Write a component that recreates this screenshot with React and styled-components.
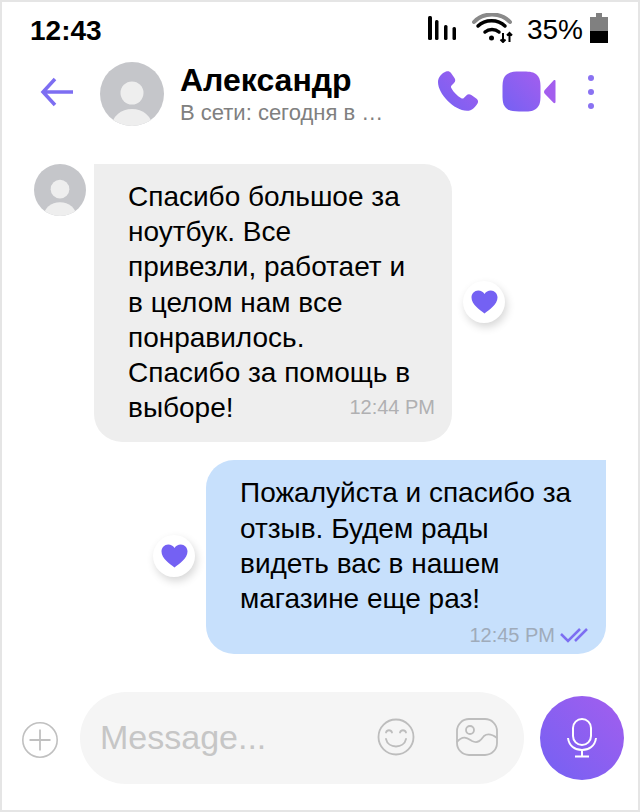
import React from "react";
import styled, { createGlobalStyle } from "styled-components";

const GlobalStyle = createGlobalStyle`
  html, body {
    margin: 0;
    padding: 0;
    background: #fff;
  }
  * {
    box-sizing: border-box;
  }
`;

const Frame = styled.div`
  width: 640px;
  height: 812px;
  border: 2px solid #e5e5e5;
  background: #fff;
  display: flex;
  flex-direction: column;
  font-family: "Liberation Sans", Arial, sans-serif;
  color: #000;
  overflow: hidden;
`;

const StatusBar = styled.div`
  height: 58px;
  flex: none;
  padding: 8px 30px 0 28px;
  display: flex;
  justify-content: space-between;
  align-items: flex-start;
`;

const Clock = styled.div`
  font-size: 28px;
  line-height: 42px;
  font-weight: 700;
`;

const StatusIcons = styled.div`
  display: flex;
  align-items: center;
  height: 36px;
`;

const Battery = styled.div`
  font-size: 28px;
  line-height: 42px;
  margin: 0 7px 0 14px;
  position: relative;
  top: 2px;
`;

const Header = styled.div`
  height: 68px;
  flex: none;
  padding-left: 36px;
  display: flex;
  align-items: center;
`;

const BackButton = styled.div`
  width: 62px;
  margin-top: -4px;
  display: flex;
  align-items: center;
`;

const Avatar = styled.div`
  width: ${(p) => p.$size}px;
  height: ${(p) => p.$size}px;
  flex: none;
  border-radius: 50%;
  background: #c5c6ca;
  overflow: hidden;
`;

const AvatarIcon = styled.svg`
  display: block;
  width: 100%;
  height: 100%;
`;

const Contact = styled.div`
  width: 256px;
  margin-left: 16px;
`;

const Name = styled.div`
  font-size: 32px;
  line-height: 36px;
  font-weight: 700;
`;

const Presence = styled.div`
  font-size: 22px;
  line-height: 26px;
  margin-top: 2px;
  color: #808080;
  white-space: nowrap;
`;

const Actions = styled.div`
  display: flex;
  align-items: center;
  margin: -4px 0 0 1px;
`;

const Messages = styled.div`
  flex: 1;
  padding-top: 36px;
  display: flex;
  flex-direction: column;
  gap: 18px;
`;

const Row = styled.div`
  display: flex;
  align-items: center;
  justify-content: ${(p) => (p.$mine ? "flex-end" : "flex-start")};
  gap: 11px;
  padding: ${(p) => (p.$mine ? "0 32px 0 0" : "0 0 0 32px")};
`;

const IncomingWrap = styled.div`
  display: flex;
  gap: 8px;
  align-items: flex-start;
`;

const Bubble = styled.div`
  position: relative;
  width: ${(p) => (p.$mine ? 400 : 358)}px;
  padding: ${(p) => (p.$mine ? "15px 20px 38px 34px" : "15px 20px 17px 34px")};
  background: ${(p) => (p.$mine ? "#c7e0fc" : "#eeeeee")};
  border-radius: ${(p) => (p.$mine ? "28px 0 28px 28px" : "0 28px 28px 28px")};
  font-size: 28px;
  line-height: 35.2px;
`;

const Meta = styled.div`
  position: absolute;
  right: ${(p) => (p.$mine ? 18 : 17)}px;
  bottom: ${(p) => (p.$mine ? 8 : 24)}px;
  display: flex;
  align-items: center;
  gap: 5px;
  font-size: 20px;
  line-height: 22px;
  color: ${(p) => (p.$mine ? "#9fabba" : "#b0b0b2")};
`;

const Reaction = styled.div`
  width: 42px;
  height: 42px;
  flex: none;
  margin-top: -2px;
  border-radius: 50%;
  background: #fff;
  box-shadow: 2px 4px 8px rgba(0, 0, 0, 0.16);
  display: flex;
  align-items: center;
  justify-content: center;
`;

const Composer = styled.div`
  flex: none;
  height: 118px;
  padding: 0 14px 26px 20px;
  display: flex;
  align-items: center;
`;

const PlusIcon = styled.svg`
  flex: none;
  margin-top: 4px;
`;

const InputPill = styled.div`
  width: 444px;
  height: 92px;
  margin-left: 22px;
  padding: 0 26px 0 20px;
  border-radius: 46px;
  background: #f5f5f5;
  display: flex;
  align-items: center;
`;

const Placeholder = styled.div`
  flex: 1;
  font-size: 34px;
  color: #c6c6c6;
  margin-top: -2px;
`;

const PillIcons = styled.div`
  display: flex;
  align-items: center;
  gap: 41px;
  margin-top: -2px;
`;

const MicButton = styled.div`
  width: 84px;
  height: 84px;
  margin-left: 16px;
  flex: none;
  border-radius: 50%;
  background: linear-gradient(45deg, #7461f3, #a35eee);
  display: flex;
  align-items: center;
  justify-content: center;
`;

const Gradient = () => (
  <svg width="0" height="0" style={{ position: "absolute" }}>
    <defs>
      <linearGradient id="violet" x1="0" y1="1" x2="1" y2="0">
        <stop offset="0" stopColor="#7461f3" />
        <stop offset="1" stopColor="#a35eee" />
      </linearGradient>
    </defs>
  </svg>
);

const Person = () => (
  <AvatarIcon viewBox="0 0 64 64">
    <circle cx="32" cy="31" r="11.5" fill="#eeeeee" />
    <ellipse cx="32" cy="64" rx="20" ry="17" fill="#eeeeee" />
  </AvatarIcon>
);

const Heart = () => (
  <svg width="27" height="24" viewBox="0 0 27 24">
    <path
      d="M13.5 23.5C9 20 .5 14.5.5 7.5.5 3.4 3.6.5 7.2.5c2.7 0 5 1.3 6.3 3.6C14.8 1.8 17.1.5 19.8.5c3.6 0 6.7 2.9 6.7 7 0 7-8.5 12.500-13 16z"
      fill="#7461f3"
    />
  </svg>
);

const App = () => (
  <>
    <GlobalStyle />
    <Gradient />
    <Frame>
      <StatusBar>
        <Clock>12:43</Clock>
        <StatusIcons>
          <svg width="28" height="24" viewBox="0 0 28 24" style={{ marginRight: 16 }}>
            <g fill="#000">
              <rect x="0" y="0" width="4" height="24" rx="1.5" />
              <rect x="7" y="4" width="3.5" height="20" rx="1.5" />
              <rect x="16" y="9" width="3.5" height="15" rx="1.5" />
              <rect x="24.5" y="11" width="3.5" height="13" rx="1.5" />
            </g>
          </svg>
          <svg width="41" height="30" viewBox="0 0 41 30">
            <g fill="none" strokeLinecap="round">
              <path d="M2 9C11 -1 29 -1 38 9" stroke="#8a8a8a" strokeWidth="4" />
              <path d="M6 13C13 6 26 6 33 13" stroke="#000" strokeWidth="3.5" />
              <path d="M13 19C17 15.500 23 15.500 27 19" stroke="#000" strokeWidth="3.5" />
            </g>
            <circle cx="19.5" cy="25" r="2.5" fill="#000" />
            <path d="M31 20v9M28.5 26.5 31 29l2.5-2.500M37.5 29v-9M35 22.500l2.500-2.500 2.500 2.500" stroke="#000" strokeWidth="2" fill="none" />
          </svg>
          <Battery>35%</Battery>
          <svg width="18" height="30" viewBox="0 0 18 30">
            <path d="M6 0h6v4h6v14H0V4h6z" fill="#808080" />
            <rect y="18" width="18" height="12" fill="#000" />
          </svg>
        </StatusIcons>
      </StatusBar>

      <Header>
        <BackButton>
          <svg width="36" height="32" viewBox="0 0 36 32" fill="none">
            <path d="M35 16H5M17 3 5 16l12 13" stroke="#7d6ef2" strokeWidth="3.5" />
          </svg>
        </BackButton>
        <Avatar $size={64}>
          <Person />
        </Avatar>
        <Contact>
          <Name>Александр</Name>
          <Presence>В сети: сегодня в …</Presence>
        </Contact>
        <Actions>
          <svg width="42" height="42" viewBox="0 0 42 42">
            <path
              d="M9 .5c2-.8 3.8-.3 5 1.5l3.5 5c1.2 1.8.9 3.5-.5 5l-2.5 2.5c-.7.8-.7 1.6-.2 2.5 2.5 4.5 5.7 7.7 10 10.200 1 .5 1.8.4 2.500-.3l2.500-2.500c1.500-1.400 3.200-1.600 5-.4l5 3.500c1.800 1.200 2.300 3.300 1.200 5-2 3.500-5.500 7.300-10.500 7.300C17 39.500 1 23 1 11 1 6 5 2 9 .5z"
              fill="url(#violet)"
            />
          </svg>
          <svg width="54" height="42" viewBox="0 0 54 42" style={{ marginLeft: 23 }}>
            <path
              d="M18 .5h4c6 0 10 .5 13 3.5s3.5 7 3.5 13v7c0 6-.5 10-3.5 13s-7 3.5-13 3.5h-5c-6 0-10-.5-13-3.5S.5 30 .5 24v-7c0-6 .5-10 3.5-13s8-3.5 14-3.5z"
              fill="url(#violet)"
            />
            <path d="M53.5 10v21c0 1-1 1.5-2 .8L43 23c-1.300-1.300-1.300-3 0-4.300l8.500-9.200c1-.8 2-.3 2 .5z" fill="#a35eee" />
          </svg>
          <svg width="10" height="34" viewBox="0 0 10 34" style={{ marginLeft: 30 }}>
            <circle cx="5" cy="3" r="3" fill="#8a72f2" />
            <circle cx="5" cy="17" r="3" fill="#8a72f2" />
            <circle cx="5" cy="31" r="3" fill="#8a72f2" />
          </svg>
        </Actions>
      </Header>

      <Messages>
        <Row>
          <IncomingWrap>
            <Avatar $size={52}>
              <Person />
            </Avatar>
            <Bubble>
              Спасибо большое за
              <br />
              ноутбук. Все
              <br />
              привезли, работает и
              <br />в целом нам все
              <br />
              понравилось.
              <br />
              Спасибо за помощь в
              <br />
              выборе!
              <Meta>12:44 PM</Meta>
            </Bubble>
          </IncomingWrap>
          <Reaction>
            <Heart />
          </Reaction>
        </Row>
        <Row $mine>
          <Reaction>
            <Heart />
          </Reaction>
          <Bubble $mine>
            Пожалуйста и спасибо за
            <br />
            отзыв. Будем рады
            <br />
            видеть вас в нашем
            <br />
            магазине еще раз!
            <Meta $mine>
              12:45 PM
              <svg width="28" height="16" viewBox="0 0 28 16" fill="none">
                <path d="M1 7l7 7L20 2M15 14 27 2" stroke="#7d6ef2" strokeWidth="2.5" />
              </svg>
            </Meta>
          </Bubble>
        </Row>
      </Messages>

      <Composer>
        <PlusIcon width="36" height="36" viewBox="0 0 36 36" fill="none" stroke="#c0c0c0">
          <circle cx="18" cy="18" r="17.2" strokeWidth="1.6" />
          <path d="M18 7.5v21M7.5 18h21" strokeWidth="1.8" />
        </PlusIcon>
        <InputPill>
          <Placeholder>Message...</Placeholder>
          <PillIcons>
            <svg width="38" height="38" viewBox="0 0 38 38" fill="none" stroke="#bdbdbd" strokeWidth="1.8">
              <circle cx="19" cy="19" r="17.5" />
              <path d="M9 14.5c1-3 5-3 6 0M23 14.5c1-3 5-3 6 0M9 21c2 10 18 10 20 0" strokeLinecap="round" />
            </svg>
            <svg width="42" height="38" viewBox="0 0 42 38" fill="none" stroke="#bdbdbd" strokeWidth="1.8">
              <rect x="1" y="1" width="40" height="36" rx="12" />
              <circle cx="14" cy="12" r="4" />
              <path d="M1 24c6-7 10-4 15-1 6 3 9-1 12-5 4-3 9-1 13 2" />
            </svg>
          </PillIcons>
        </InputPill>
        <MicButton>
          <svg width="30" height="40" viewBox="0 0 30 40" fill="none" stroke="#fff" strokeWidth="2">
            <rect x="6" y="1" width="18" height="26" rx="9" />
            <path d="M1 20c1 8 7 12 14 12s13-4 14-12M15 32v6M8 38.5h14" />
          </svg>
        </MicButton>
      </Composer>
    </Frame>
  </>
);

export default App;
